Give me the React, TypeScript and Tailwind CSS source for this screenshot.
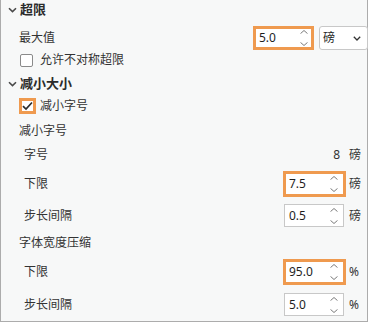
const ORANGE = "border-[#ef9a4f]";

function Chevron() {
  return (
    <svg width="9" height="6" viewBox="0 0 9 6" className="ml-[7px] mr-[3px]">
      <path d="M1 1.2 L4.5 4.6 L8 1.2" fill="none" stroke="#4a4a4a" strokeWidth="1.6" />
    </svg>
  );
}

function Spinner() {
  return (
    <div className="flex h-full flex-col items-center justify-center gap-[8px]">
      <svg width="8" height="4" viewBox="0 0 8 4">
        <path d="M0.5 3.6 L4 0.5 L7.5 3.6" fill="none" stroke="#7a7a7a" strokeWidth="1" />
      </svg>
      <svg width="8" height="4" viewBox="0 0 8 4">
        <path d="M0.5 0.4 L4 3.5 L7.5 0.4" fill="none" stroke="#7a7a7a" strokeWidth="1" />
      </svg>
    </div>
  );
}

function NumBox({ value, hot, className }: { value: string; hot?: boolean; className: string }) {
  return (
    <div
      className={`flex items-center bg-white ${
        hot ? `border-[3px] ${ORANGE} pl-[3px]` : "border border-[#c8c8c8] pl-[4px]"
      } ${className}`}
    >
      <span className="flex-1 text-[12px] leading-none text-[#1e1e1e]">{value}</span>
      <Spinner />
    </div>
  );
}

function SubRow({
  label,
  unit,
  value,
  hot,
  plain,
  className,
}: {
  label: string;
  unit: string;
  value: string;
  hot?: boolean;
  plain?: boolean;
  className: string;
}) {
  return (
    <div className={`flex items-center pl-[23px] ${className}`}>
      <span className="flex-1">{label}</span>
      <div className="flex h-full w-[63px] items-center">
        {plain ? (
          <span className="w-full pr-[6px] text-right">{value}</span>
        ) : hot ? (
          <NumBox value={value} hot className="h-[26px] w-[63px] pr-[5px]" />
        ) : (
          <NumBox value={value} className="ml-[1px] h-[23px] w-[60px] pr-[5px]" />
        )}
      </div>
      <span className="ml-[3px] w-[18px]">{unit}</span>
    </div>
  );
}

export default function App() {
  return (
    <div className="h-[322px] w-[368px] border-x border-b border-[#acacac] bg-[#f7f8f8] font-['Segoe_UI','Noto_Sans','Noto_Sans_CJK_SC',sans-serif] text-[12px] text-[#333333]">
      <div className="flex h-[20px] items-center text-[13px] font-bold text-[#2b2b2b]">
        <Chevron />
        超限
      </div>

      <div className="mt-[6px] flex h-[24px] items-center pl-[18px]">
        <span className="flex-1">最大值</span>
        <NumBox value="5.0" hot className="h-[24px] w-[61px] pr-[3px]" />
        <div className="ml-[5px] mr-[-1px] flex h-[24px] w-[49px] items-center rounded-[3px] border border-[#c8c8c8] bg-white pl-[3px] pr-[6px]">
          <span className="flex-1 text-[#1e1e1e]">磅</span>
          <svg width="8" height="5" viewBox="0 0 8 5">
            <path d="M0.8 0.8 L4 4 L7.2 0.8" fill="none" stroke="#333" strokeWidth="1.3" />
          </svg>
        </div>
      </div>

      <div className="flex h-[20px] items-center pl-[19px]">
        <span className="h-[13px] w-[13px] rounded-[2px] border border-[#8a8a8a] bg-white" />
        <span className="ml-[7px]">允许不对称超限</span>
      </div>

      <div className="mt-[4px] flex h-[20px] items-center text-[13px] font-bold text-[#2b2b2b]">
        <Chevron />
        减小大小
      </div>

      <div className="mt-[2px] flex h-[20px] items-center pl-[18px]">
        <span className={`flex h-[16px] w-[17px] items-center justify-center border-[3px] ${ORANGE} bg-white`}>
          <svg width="11" height="10" viewBox="0 0 11 10">
            <path d="M1 5.2 L4 8 L10 1.5" fill="none" stroke="#2b2b2b" strokeWidth="1.7" />
          </svg>
        </span>
        <span className="ml-[4px]">减小字号</span>
      </div>

      <div className="mt-[5px] flex h-[20px] items-center pl-[18px]">减小字号</div>

      <SubRow label="字号" unit="磅" value="8" plain className="mt-[4px] h-[20px]" />
      <SubRow label="下限" unit="磅" value="7.5" hot className="mt-[6px] h-[26px]" />
      <SubRow label="步长间隔" unit="磅" value="0.5" className="mt-[7px] h-[23px]" />

      <div className="mt-[6px] flex h-[20px] items-center pl-[18px]">字体宽度压缩</div>

      <SubRow label="下限" unit="%" value="95.0" hot className="mt-[6px] h-[26px]" />
      <SubRow label="步长间隔" unit="%" value="5.0" className="mt-[8px] h-[23px]" />
    </div>
  );
}
